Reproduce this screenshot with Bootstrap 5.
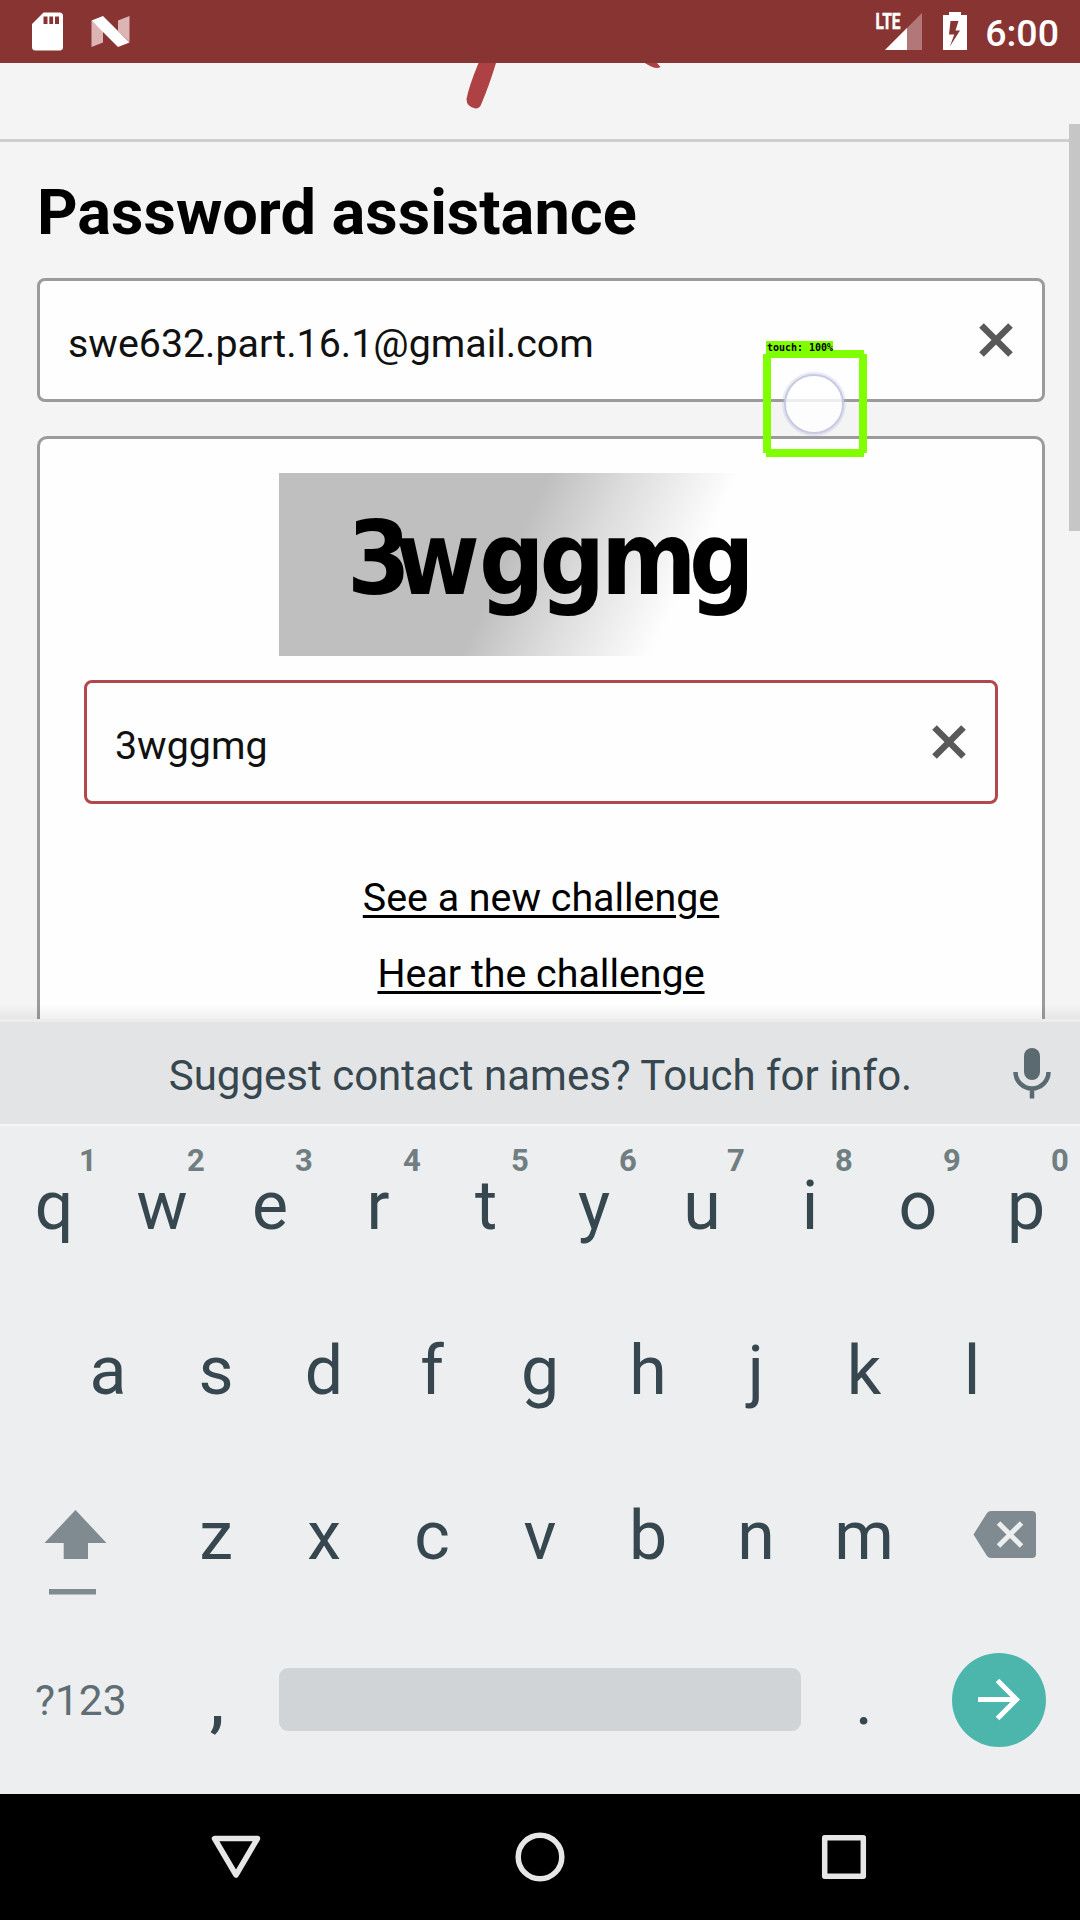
<!DOCTYPE html>
<html lang="en">
<head>
<meta charset="utf-8">
<meta name="viewport" content="width=device-width, initial-scale=1">
<title>Password assistance</title>
<link href="https://cdn.jsdelivr.net/npm/bootstrap@5.3.0/dist/css/bootstrap.min.css" rel="stylesheet">
<style>
  body { font-family: Roboto, "Liberation Sans", sans-serif; background: #f4f4f4; color: #111; overflow: hidden; }
  .screen { width: 1080px; height: 1920px; }
  .statusbar { height: 63px; background: #883432; padding: 0 21px 0 32px; }
  .clock { font-size: 37.5px; font-weight: 500; line-height: 1; margin-top: 4px; margin-left: 18px; }
  .webpage { height: 956px; background: #f4f4f4; }
  .logo-strip { height: 79px; border-bottom: 3px solid #cecece; }
  .content-area { padding: 32px 35px 0 37px; }
  .page-title { font-size: 63.1px; font-weight: 700; line-height: 76px; margin: 0 0 28px; color: #000; }
  .text-box { height: 124px; border: 3px solid #9b9b9b; border-radius: 8px; background: #fefefe; padding-right: 28px; }
  .text-box.focused { border-color: #b2484c; }
  .text-box .form-control { font-size: 39.375px; line-height: 1.2; padding: 7px 0 0 28px; color: #111; box-shadow: none; }
  .captcha-card { height: 700px; margin-top: 34px; padding: 34px 44px 0; border: 3px solid #9b9b9b; border-radius: 10px; background: #fefefe; }
  .captcha-img { width: 525px; height: 183px; margin-bottom: 24px; background: linear-gradient(116deg, #bfbfbf 44%, #dcdcdc 57%, #fefefe 75%); }
  .captcha-img text { font-family: "DejaVu Sans Condensed", "DejaVu Sans", sans-serif; font-stretch: condensed; font-weight: 700; font-size: 102px; }
  .challenge { font-size: 39.375px; line-height: 76px; color: #000; text-underline-offset: 4px; text-decoration-thickness: 2.6px; }
  .scroll-thumb { position: absolute; right: 0; top: 61px; width: 11px; height: 407px; background: #c6c6c6; }
  .kb-shadow { position: absolute; left: 0; right: 0; bottom: 0; height: 15px; background: linear-gradient(rgba(0,0,0,0), rgba(0,0,0,.06)); }
  .keyboard { height: 775px; background: #eceeef; color: #37474f; }
  .suggestion { height: 107px; background: #e3e4e5; border-top: 3px solid #ebecec; border-bottom: 2px solid #f5f6f6; font-size: 42px; padding: 2px 28px 0 0; }
  .suggestion span { padding: 2px 0 0 69px; }
  .key-row { height: 165px; padding-bottom: 5px; }
  .key-cell { width: 108px; text-align: center; font-size: 68px; line-height: 160px; position: relative; }
  .key-cell sup { position: absolute; left: 34px; width: 108px; top: 19px; font-size: 31px; font-weight: 700; line-height: 32px; color: #707d81; }
  .symbols { width: 162px; font-size: 42.4px; color: #5f6e74; padding-left: 35px; line-height: 160px; }
  .comma { font-weight: 500; padding-left: 2px; }
  .spacebar { width: 522px; height: 63px; border-radius: 9px; background: #d0d4d7; margin: 0 9px 3px; }
  .enter { width: 94px; height: 94px; border-radius: 50%; background: #4db6ac; margin: 0 34px 2px auto; }
  .navbtns { height: 126px; background: #000; }
  .touch-mark { position: absolute; left: 763px; top: 341px; }
  .touch-mark text { font-family: "DejaVu Sans Mono", monospace; font-weight: 700; font-size: 9.6px; }
</style>
</head>
<body>
<div class="screen position-relative d-flex flex-column overflow-hidden">
  <header class="statusbar d-flex align-items-center text-white flex-shrink-0">
    <svg width="98" height="63" viewBox="32 0 98 63">
      <path fill="#fff" fill-rule="evenodd" d="M43.500 12.500H59.500a3.500 3.500 0 0 1 3.500 3.500V47a3.500 3.500 0 0 1-3.500 3.500H35.500A3.500 3.500 0 0 1 32 47V24zM43.500 16.500V24h4V16.500zM49.300 16.500V24h3.800V16.500zM55 16.500V24h4V16.500z"/>
      <path fill="#dcb4b4" d="M91.500 20.500 103 31V42.500L91.500 47zM118 20.500 129.500 16V42L118 31z"/>
      <path fill="#fff" d="M91.500 20.500 103 16 129.500 42.500 118 47z"/>
    </svg>
    <svg class="ms-auto" width="92" height="63" viewBox="875 0 92 63">
      <path fill="#b27778" d="M922 13V50H885z"/>
      <path fill="#fff" d="M907 28V50H885z"/>
      <text x="875.500" y="29" textLength="25" lengthAdjust="spacingAndGlyphs" font-family="Roboto" font-weight="700" font-size="22.500" fill="#fff" stroke="#fff" stroke-width=".5">LTE</text>
      <path fill="#fff" fill-rule="evenodd" d="M949 12H961V15H967V50H943V15H949zM950.500 21 949 34.500H954.300L949.800 46.500 960 30.500H955.500L958.500 21z"/>
    </svg>
    <span class="clock">6:00</span>
  </header>

  <main class="webpage position-relative overflow-hidden flex-shrink-0">
    <div class="logo-strip">
      <svg class="d-block" width="1080" height="76" viewBox="0 63 1080 76">
        <path fill="#ae4144" d="M478.500 63H496Q489 86 481.500 103.500Q480 108.500 475.500 108.500Q466.500 107 466.500 99Q469 86 478.500 63zM645 63H657L660.500 67Q656 70.500 645 63z"/>
      </svg>
    </div>
    <div class="content-area">
      <h1 class="page-title">Password assistance</h1>
      <div class="text-box d-flex align-items-center">
        <input class="form-control border-0 bg-transparent flex-grow-1" type="text" value="swe632.part.16.1@gmail.com" aria-label="Email">
        <svg class="flex-shrink-0" width="36" height="36" viewBox="0 0 36 36" stroke="#595959" stroke-width="6.500"><path d="M3.500 3.500 32.500 32.500M32.500 3.500 3.500 32.500"/></svg>
      </div>
      <section class="captcha-card d-flex flex-column align-items-center">
        <div class="captcha-img flex-shrink-0">
          <svg class="d-block" width="525" height="183" viewBox="279 473 525 183"><text x="347 395 479 539.500 601 689" y="593.500">3wggmg</text></svg>
        </div>
        <div class="text-box focused d-flex align-items-center align-self-stretch flex-shrink-0">
          <input class="form-control border-0 bg-transparent flex-grow-1" type="text" value="3wggmg" aria-label="Characters">
          <svg class="flex-shrink-0" width="36" height="36" viewBox="0 0 36 36" stroke="#595959" stroke-width="6.500"><path d="M3.500 3.500 32.500 32.500M32.500 3.500 3.500 32.500"/></svg>
        </div>
        <div class="d-flex flex-column align-items-center mt-5 pt-2">
          <a class="challenge" href="#">See a new challenge</a>
          <a class="challenge" href="#">Hear the challenge</a>
        </div>
      </section>
    </div>
    <div class="scroll-thumb"></div>
    <div class="kb-shadow"></div>
  </main>

  <section class="keyboard flex-shrink-0">
    <div class="suggestion d-flex align-items-center">
      <span class="flex-grow-1 text-center">Suggest contact names? Touch for info.</span>
      <svg class="flex-shrink-0" width="40" height="54" viewBox="1012 1046 40 54" fill="none" stroke="#5b6a71">
        <rect x="1024" y="1047" width="16" height="32" rx="8" fill="#5b6a71" stroke="none"/>
        <path stroke-width="4.500" d="M1015.500 1071a16.500 16.500 0 0 0 33 0M1032 1087V1097.500"/>
      </svg>
    </div>
    <div class="key-row d-flex">
      <div class="key-cell">q<sup>1</sup></div><div class="key-cell">w<sup>2</sup></div><div class="key-cell">e<sup>3</sup></div><div class="key-cell">r<sup>4</sup></div><div class="key-cell">t<sup>5</sup></div><div class="key-cell">y<sup>6</sup></div><div class="key-cell">u<sup>7</sup></div><div class="key-cell">i<sup>8</sup></div><div class="key-cell">o<sup>9</sup></div><div class="key-cell">p<sup>0</sup></div>
    </div>
    <div class="key-row d-flex justify-content-center">
      <div class="key-cell">a</div><div class="key-cell">s</div><div class="key-cell">d</div><div class="key-cell">f</div><div class="key-cell">g</div><div class="key-cell">h</div><div class="key-cell">j</div><div class="key-cell">k</div><div class="key-cell">l</div>
    </div>
    <div class="key-row d-flex">
      <svg width="162" height="160" viewBox="0 1456 162 160" fill="#7f8b90"><path d="M75.500 1510 106.500 1543H88V1559H63.700V1543H44.500zM49 1589H96V1594.500H49z"/></svg>
      <div class="key-cell">z</div><div class="key-cell">x</div><div class="key-cell">c</div><div class="key-cell">v</div><div class="key-cell">b</div><div class="key-cell">n</div><div class="key-cell">m</div>
      <svg width="162" height="160" viewBox="918 1456 162 160"><path fill="#7f8b90" d="M991 1511H1032a4 4 0 0 1 4 4V1554a4 4 0 0 1-4 4H991a5 5 0 0 1-4-2L973.500 1534.500 987 1513a5 5 0 0 1 4-2z"/><path stroke="#eceeef" stroke-width="5" d="M998.500 1523 1021.500 1546M1021.500 1523 998.500 1546"/></svg>
    </div>
    <div class="key-row d-flex align-items-center">
      <div class="symbols">?123</div>
      <div class="key-cell comma">,</div>
      <div class="spacebar"></div>
      <div class="key-cell flex-shrink-0">.</div>
      <div class="enter d-flex align-items-center justify-content-center">
        <svg width="44" height="44" viewBox="976.500 1678 44 44" fill="none" stroke="#fff" stroke-width="5"><path d="M977.500 1699.500H1016M997 1680.500 1016 1699.500 997 1718.500"/></svg>
      </div>
    </div>
  </section>

  <nav class="navbtns flex-shrink-0">
    <svg class="d-block" width="1080" height="126" viewBox="0 1794 1080 126" fill="none" stroke="#e6e6e6" stroke-width="5.500" stroke-linejoin="round">
      <path d="M214.500 1838.500H257.500L236 1875z"/><circle cx="540" cy="1857" r="21.800"/><rect x="824.700" y="1837.700" width="38.600" height="38.600"/>
    </svg>
  </nav>

  <svg class="touch-mark" width="104" height="116" viewBox="763 341 104 116">
    <circle cx="814" cy="404" r="30" fill="none" stroke="#b9bce6" stroke-opacity=".3" stroke-width="4"/>
    <circle cx="814" cy="404" r="29" fill="#fff" fill-opacity=".82" stroke="#c8cae2" stroke-width="2"/>
    <path fill="#80ff00" d="M766 341H833V350H864V354H867V453H864V457H766V453H763V354H766z M771 358V449H859V358z" fill-rule="evenodd"/>
    <text x="767" y="351" textLength="66" lengthAdjust="spacingAndGlyphs">touch: 100%</text>
  </svg>
</div>
<script src="https://cdn.jsdelivr.net/npm/bootstrap@5.3.0/dist/js/bootstrap.bundle.min.js"></script>
</body>
</html>
